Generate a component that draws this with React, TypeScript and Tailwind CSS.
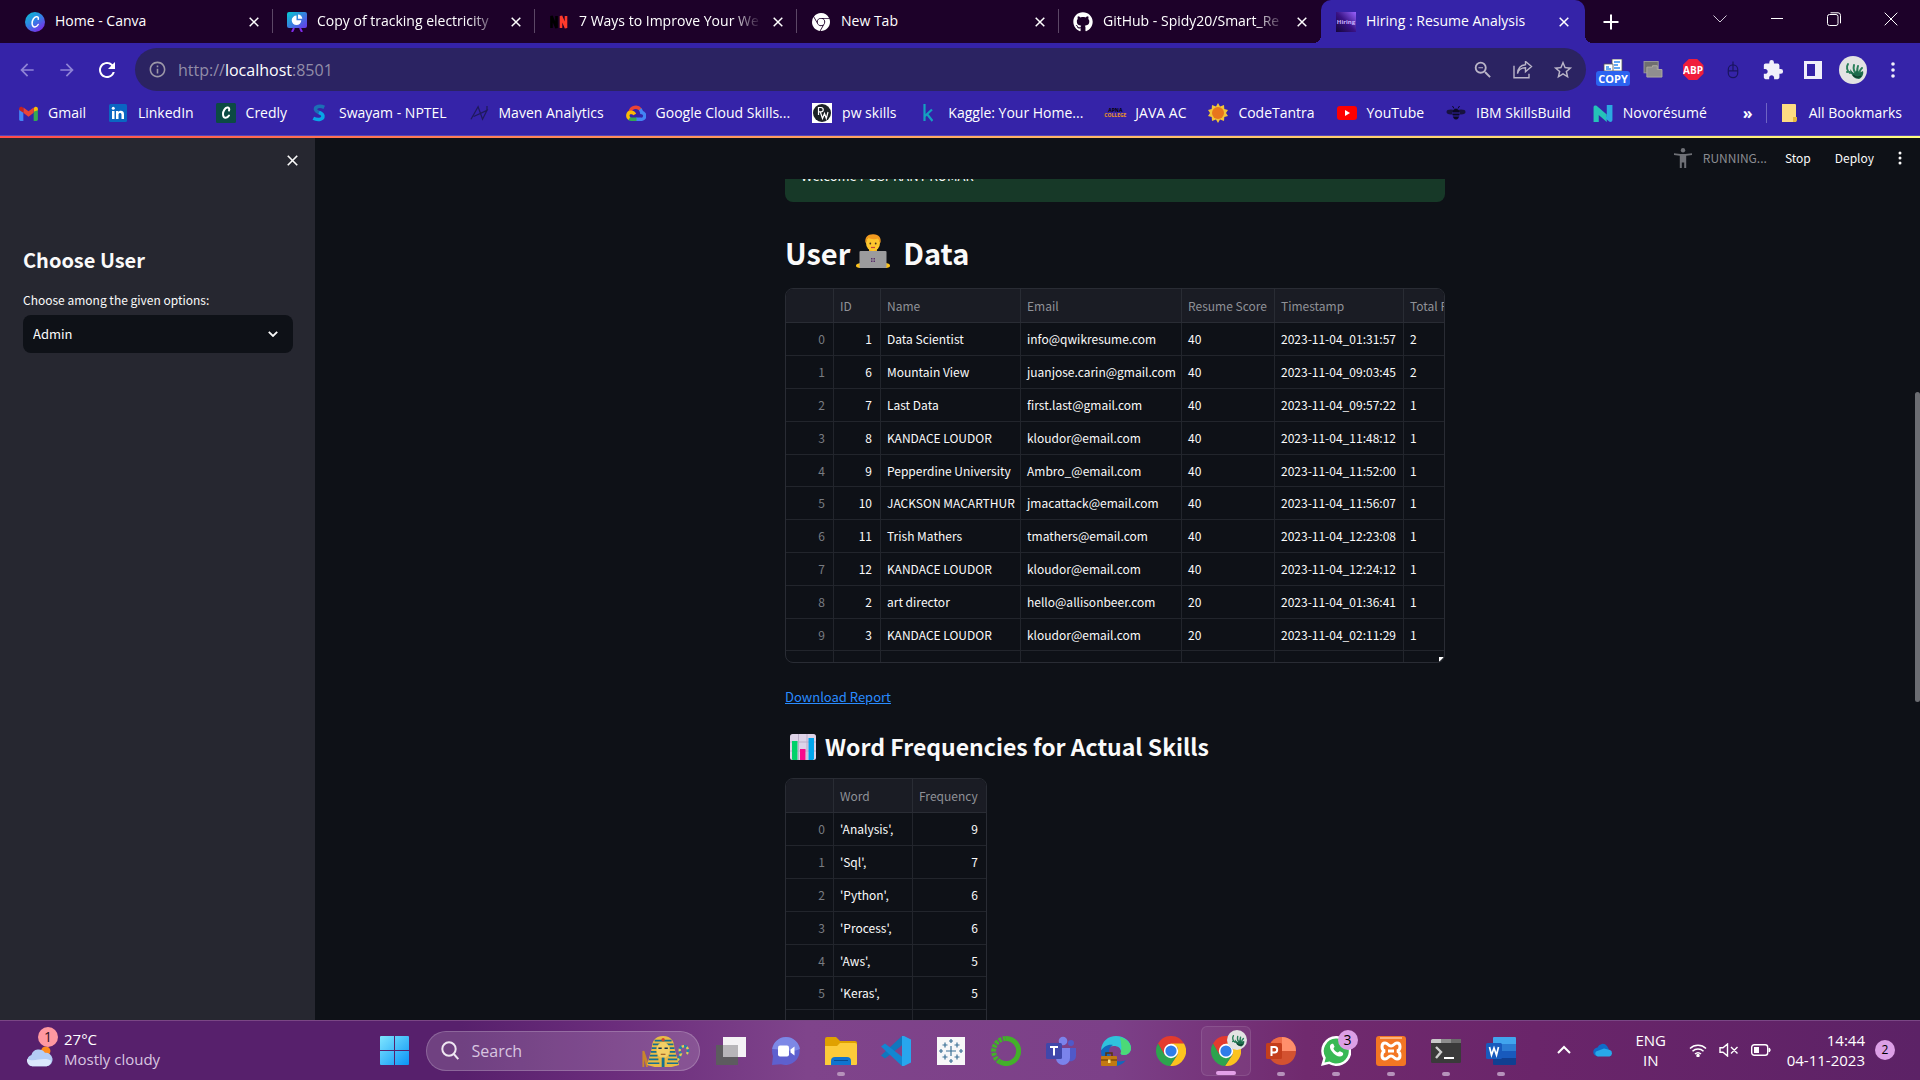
import React, { type ReactNode } from "react";
import { FaGithub } from "react-icons/fa";
import { SiGooglechrome } from "react-icons/si";
import { MdArrowBack, MdArrowForward, MdExtension, MdInfoOutline, MdRefresh, MdStarBorder, MdZoomOut } from "react-icons/md";

/* ---------- browser tabs ---------- */

function CanvaIcon() {
  return (
    <svg viewBox="0 0 20 20" className="size-5">
      <defs>
        <linearGradient id="canva" x1="0" y1="0" x2="0.7" y2="1">
          <stop offset="0" stopColor="#08c4cf" />
          <stop offset="0.5" stopColor="#2e86e6" />
          <stop offset="1" stopColor="#7b2be8" />
        </linearGradient>
      </defs>
      <circle cx="10" cy="10" r="10" fill="url(#canva)" />
      <path d="M13.2 7.2c.6-1.6-.3-2.8-1.9-2.5-2.3.4-4.2 3.600-4.200 6.500 0 2.300 1.100 3.800 2.800 3.700 1.300-.1 2.500-1 3.300-2.400" fill="none" stroke="#fff" strokeWidth="1.500" strokeLinecap="round" />
    </svg>
  );
}

function SlidesIcon() {
  return (
    <svg viewBox="0 0 20 20" className="size-5">
      <defs>
        <linearGradient id="slides" x1="0" y1="0" x2="1" y2="1">
          <stop offset="0" stopColor="#05cbd2" />
          <stop offset="1" stopColor="#6a35ea" />
        </linearGradient>
      </defs>
      <rect width="20" height="16" rx="2" fill="url(#slides)" />
      <path d="M7 16l-2 4M13 16l2 4" stroke="#7d2ae8" strokeWidth="2" />
      <path d="M9.500 3.500a4.800 4.800 0 1 0 4.800 4.800H9.500z" fill="#fff" />
      <path d="M11 2.500v4.300h4.300A4.300 4.300 0 0 0 11 2.500z" fill="#fff" />
    </svg>
  );
}

function NNIcon() {
  return (
    <svg viewBox="0 0 20 20" className="size-5">
      <path d="M2.500 16V4l5 12V4" fill="none" stroke="#000" strokeWidth="2.600" />
      <path d="M12 16V4l5 12V4" fill="none" stroke="#ff3a2b" strokeWidth="2.600" />
    </svg>
  );
}

function HiringIcon() {
  return (
    <span className="flex size-5 items-center justify-center bg-linear-to-bl from-[#9a62ff] via-[#3a1286] to-[#14063a] text-[6px] font-bold leading-none text-[#c9b2ff]">
      Hiring
    </span>
  );
}

function CloseGlyph({ className = "size-[10px]" }: { className?: string }) {
  return (
    <svg viewBox="0 0 10 10" className={className} fill="none" stroke="currentColor" strokeWidth="1.500">
      <path d="M0.700 0.700l8.600 8.600M9.300 0.700L0.700 9.300" />
    </svg>
  );
}

const tabs: { title: string; icon: ReactNode; fade?: boolean }[] = [
  { title: "Home - Canva", icon: <CanvaIcon /> },
  { title: "Copy of tracking electricity", icon: <SlidesIcon />, fade: true },
  { title: "7 Ways to Improve Your We", icon: <NNIcon />, fade: true },
  { title: "New Tab", icon: <SiGooglechrome className="size-[18px] text-white" /> },
  { title: "GitHub - Spidy20/Smart_Re", icon: <FaGithub className="size-5 text-white" />, fade: true },
  { title: "Hiring : Resume Analysis", icon: <HiringIcon /> },
];

function TabStrip() {
  return (
    <div className="flex h-[43px] shrink-0 items-stretch bg-[#1d0129] pl-[11px] text-white">
      {tabs.map((t, i) => {
        const active = i === tabs.length - 1;
        return (
          <div
            key={t.title}
            className={
              active
                ? "relative flex w-[264px] min-w-0 items-center rounded-t-[10px] bg-[#3523a8] pl-[15px] pr-4"
                : "relative flex w-[262px] min-w-0 items-center pl-[14px] pr-[14px]"
            }
          >
            <span className="flex w-5 shrink-0 justify-center">{t.icon}</span>
            <span
              className={
                t.fade
                  ? "ml-[10px] mr-2 min-w-0 flex-1 overflow-hidden whitespace-nowrap pb-px text-sm [mask-image:linear-gradient(to_right,#000_82%,transparent_98%)]"
                  : "ml-[10px] mr-2 min-w-0 flex-1 overflow-hidden whitespace-nowrap pb-px text-sm"
              }
            >
              {t.title}
            </span>
            <button aria-label={`Close ${t.title}`} className="shrink-0">
              <CloseGlyph />
            </button>
            {i < tabs.length - 2 && <span className="absolute right-0 top-[9px] h-6 w-px bg-[#5c4766]" />}
            {active && (
              <>
                <span className="absolute -left-2 bottom-0 size-2 bg-[radial-gradient(circle_at_0_0,transparent_8px,#3523a8_8px)]" />
                <span className="absolute -right-2 bottom-0 size-2 bg-[radial-gradient(circle_at_100%_0,transparent_8px,#3523a8_8px)]" />
              </>
            )}
          </div>
        );
      })}
      <button aria-label="New tab" className="ml-[17px] flex w-[18px] items-center justify-center">
        <svg viewBox="0 0 16 16" className="size-4" stroke="#fff" strokeWidth="2">
          <path d="M8 0.500v15M0.500 8h15" />
        </svg>
      </button>
      <div className="ml-auto flex items-stretch pb-[6px] pr-px">
        <button aria-label="Search tabs" className="flex w-[57px] items-center justify-center">
          <svg viewBox="0 0 14 8" className="h-2 w-[14px]" fill="none" stroke="#cfc7d6"><path d="M.5.5L7 7l6.500-6.500" /></svg>
        </button>
        <button aria-label="Minimize" className="flex w-[57px] items-center justify-center">
          <span className="h-px w-3 bg-white" />
        </button>
        <button aria-label="Restore" className="flex w-[57px] items-center justify-center">
          <svg viewBox="0 0 14 14" className="size-[14px]" fill="none" stroke="#fff"><rect x="0.500" y="2.500" width="10.500" height="11" rx="2" /><path d="M3.500 .8h7.500a2.500 2.500 0 0 1 2.500 2.500v8" /></svg>
        </button>
        <button aria-label="Close window" className="flex w-[57px] items-center justify-center">
          <svg viewBox="0 0 14 14" className="size-[14px]" stroke="#fff"><path d="M.7.7l12.600 12.600M13.300.7L.7 13.300" /></svg>
        </button>
      </div>
    </div>
  );
}

/* ---------- address bar ---------- */

function GreenBird({ className }: { className: string }) {
  return (
    <svg viewBox="0 0 28 28" className={className}>
      <circle cx="14" cy="14" r="14" fill="#e3e3e3" />
      <path d="M9 8c-2 3-1 7 2 9M8 16c3-1 5 2 8 2M15 9c-1 4 0 7 3 9M19 10c-1 3-1 6 1 8M23 12c-2 2-3 4-2 6" fill="none" stroke="#2a7f5a" strokeWidth="2" strokeLinecap="round" />
      <path d="M11 13l4 5 3-4 2 3 4-2c1 3-1 7-4 8-4 0-8-3-9-10z" fill="#1d6b4c" />
      <path d="M14 19c2 2 5 3 8 1" stroke="#0f3d2c" strokeWidth="1.500" fill="none" />
    </svg>
  );
}

const extensions: { name: string; node: ReactNode }[] = [
  {
    name: "Copy",
    node: (
      <span className="flex flex-col items-center pt-[6px]">
        <svg viewBox="0 0 20 12" className="h-3 w-5">
          <path d="M9 0h10v12H9z" fill="#fff" stroke="#555" strokeWidth=".8" />
          <path d="M1 5h9v7H1z" fill="#fff" stroke="#555" strokeWidth=".8" />
          <path d="M11 3h6M11 6h4M11 9h6M3 8h3M3 10h5" stroke="#2f8df0" strokeWidth="1.300" />
        </svg>
        <span className="rounded-[3px] bg-[#2b63f0] px-[2px] text-[11px] font-bold leading-[15px] text-white">COPY</span>
      </span>
    ),
  },
  {
    name: "Windows",
    node: (
      <svg viewBox="0 0 20 18" className="h-[17px] w-5">
        <rect x="0.500" y="0.500" width="15" height="12" fill="#6f6f6f" stroke="#9a9a9a" />
        <path d="M3.500 6.500h6V5h5v4h5v8h-16z" fill="#8f8f8f" stroke="#b0aca0" />
      </svg>
    ),
  },
  {
    name: "Adblock Plus",
    node: (
      <span className="flex size-[21px] items-center justify-center bg-[#f01d3c] text-[10px] font-bold leading-none text-white [clip-path:polygon(30%_0,70%_0,100%_30%,100%_70%,70%_100%,30%_100%,0_70%,0_30%)]">
        ABP
      </span>
    ),
  },
  {
    name: "Mouse",
    node: (
      <svg viewBox="0 0 14 20" className="h-[18px] w-3" fill="none" stroke="#1a1560" strokeWidth="1.400">
        <rect x="1.500" y="4" width="11" height="15" rx="5.500" />
        <path d="M7 0v11M1.500 11h11" />
      </svg>
    ),
  },
  { name: "Extensions", node: <MdExtension className="size-[22px] text-[#f1f0fa]" /> },
  {
    name: "Side panel",
    node: (
      <svg viewBox="0 0 18 18" className="size-[18px]"><path d="M0 0h18v18H0z M3 3v12h8V3z" fill="#f1f0fa" fillRule="evenodd" /></svg>
    ),
  },
  { name: "Profile", node: <GreenBird className="size-7" /> },
  {
    name: "Menu",
    node: (
      <svg viewBox="0 0 4 16" className="h-4 w-1" fill="#f1f0fa"><circle cx="2" cy="2" r="1.800" /><circle cx="2" cy="8" r="1.800" /><circle cx="2" cy="14" r="1.800" /></svg>
    ),
  },
];

function AddressBar() {
  return (
    <div className="flex h-[53px] shrink-0 items-center bg-[#3523a8] pl-[7px] pr-[7px]">
      <button aria-label="Back" className="flex w-10 justify-center"><MdArrowBack className="size-5 text-[#8f84d6]" /></button>
      <button aria-label="Forward" className="flex w-10 justify-center"><MdArrowForward className="size-5 text-[#8f84d6]" /></button>
      <button aria-label="Reload" className="flex w-10 justify-center"><MdRefresh className="size-6 text-white" /></button>
      <div className="ml-2 flex h-[43px] min-w-0 flex-1 items-center rounded-full bg-[#2b2362] pl-[13px]">
        <MdInfoOutline className="size-[19px] shrink-0 text-[#9c98a8]" />
        <a href="http://localhost:8501" className="ml-[11px] flex-1 text-base text-[#928da8]">
          http://<span className="text-white">localhost</span>:8501
        </a>
        <button aria-label="Zoom" className="flex w-10 justify-center"><MdZoomOut className="size-[22px] text-[#bab5c8]" /></button>
        <button aria-label="Share" className="flex w-10 justify-center">
          <svg viewBox="0 0 20 18" className="h-[18px] w-5" fill="none" stroke="#bab5c8" strokeWidth="1.400"><path d="M1 5v12h15v-4M4.500 13c.8-4 3.500-6 8-6V11l6-5.300-6-5V4C7.500 4.300 4.800 8 4.500 13z" transform="translate(0 -.3)" /></svg>
        </button>
        <button aria-label="Bookmark" className="mr-[3px] flex w-10 justify-center"><MdStarBorder className="size-[22px] text-[#bab5c8]" /></button>
      </div>
      <div className="ml-[7px] flex items-center">
        {extensions.map((e) => (
          <button key={e.name} aria-label={e.name} className="flex w-10 items-center justify-center">{e.node}</button>
        ))}
      </div>
    </div>
  );
}

/* ---------- bookmarks ---------- */

const bookmarks: { name: string; icon: ReactNode }[] = [
  {
    name: "Gmail",
    icon: (
      <svg viewBox="0 0 20 16" className="h-[15px] w-[19px]">
        <path d="M0 3v11.500C0 15.300.7 16 1.500 16H4.500V6z" fill="#4285f4" />
        <path d="M20 3v11.500c0 .8-.7 1.500-1.500 1.500h-3V6z" fill="#34a853" />
        <path d="M15.500 6V2l1-.8c1.500-1.100 3.500-.2 3.500 1.800v1.500z" fill="#fbbc04" />
        <path d="M4.500 6V1.500L10 5.700l5.500-4.200V7.300L10 11.500 4.500 7.300z" fill="#ea4335" />
        <path d="M0 3C0 1 2 .1 3.500 1.200l1 .8v5.300L0 4.200z" fill="#c5221f" />
      </svg>
    ),
  },
  {
    name: "LinkedIn",
    icon: (
      <svg viewBox="0 0 18 18" className="size-[18px]">
        <rect width="18" height="18" rx="1.500" fill="#0a66c2" />
        <path d="M3 7h2.500v8H3zM7 7h2.400v1.200c1.300-2.200 5.600-1.900 5.600 2V15h-2.500v-4.300c0-2.200-3-2-3 0V15H7z" fill="#fff" />
        <circle cx="4.250" cy="4.300" r="1.500" fill="#fff" />
      </svg>
    ),
  },
  {
    name: "Credly",
    icon: (
      <svg viewBox="0 0 20 20" className="size-5">
        <rect width="20" height="20" rx="1.500" fill="#0c4a43" />
        <path d="M13 7.500c.7-1.700-.1-3.200-1.800-2.900C9 5 7 8 7 11c0 2.400 1 3.900 2.700 3.800 1.400-.1 2.500-1 3.300-2.300" fill="none" stroke="#fff" strokeWidth="2" strokeLinecap="round" />
      </svg>
    ),
  },
  {
    name: "Swayam - NPTEL",
    icon: (
      <svg viewBox="0 0 16 20" className="h-[18px] w-[14px]" fill="none" strokeWidth="4">
        <path d="M14 3.500C9 1 3.500 2.500 4 6c.3 2 3 3.200 6 4.500" stroke="#1c6fb5" />
        <path d="M8 9.300c3 1.200 5 2.700 4.500 5.200-.6 3-6 4-11 1.500" stroke="#08a6e6" />
      </svg>
    ),
  },
  {
    name: "Maven Analytics",
    icon: (
      <svg viewBox="0 0 20 18" className="h-4 w-5" fill="none" stroke="#1f1a5c" strokeWidth="1.400">
        <path d="M1 16L9 2l5 14 5-10L4 13" />
        <path d="M19 1v5" />
      </svg>
    ),
  },
  {
    name: "Google Cloud Skills...",
    icon: (
      <svg viewBox="0 0 20 16" className="h-4 w-5" fill="none" strokeWidth="3.400">
        <path d="M4 7a6 6 0 0 1 10.500-2.500" stroke="#ea4335" />
        <path d="M14 4.200c1 1 1.500 2 1.700 3.300a3.400 3.400 0 0 1-.7 6.800H10" stroke="#4285f4" />
        <path d="M10.500 14.300H5.500c-1 0-1.800-.3-2.500-.8" stroke="#34a853" />
        <path d="M3.300 13.600C1 12 1.300 7.500 5 7.300c2 0 3 1 3.700 2.200" stroke="#fbbc04" />
      </svg>
    ),
  },
  {
    name: "pw skills",
    icon: (
      <svg viewBox="0 0 20 20" className="size-5">
        <rect width="20" height="20" fill="#fff" />
        <circle cx="10" cy="10" r="9" fill="#1c2226" />
        <path d="M6.500 12V4.500h2.500a2.200 2.200 0 0 1 0 4.400H7M8.500 9.500l2 6 2-5 1.800 5L16 9" fill="none" stroke="#fff" strokeWidth="1.200" />
      </svg>
    ),
  },
  {
    name: "Kaggle: Your Home...",
    icon: (
      <svg viewBox="0 0 10 18" className="h-[18px] w-[10px]" fill="none" stroke="#14a0c0" strokeWidth="2.200"><path d="M1.500 0v17M9 5.500L2 12M4 10l5.500 7" /></svg>
    ),
  },
  {
    name: "JAVA AC",
    icon: (
      <span className="flex flex-col items-center text-[5px] font-bold leading-[5px]">
        <span className="text-black">APNA</span>
        <span className="text-[#f09a1a]">COLLEGE</span>
      </span>
    ),
  },
  {
    name: "CodeTantra",
    icon: (
      <svg viewBox="0 0 20 20" className="size-5">
        <path d="M10 0l2 3.500L16 2l.3 4 3.700 1-2 3 2 3-3.700 1-.3 4-4-1.500L10 20l-2-3.500L4 18l-.3-4L0 13l2-3-2-3 3.700-1L4 2l4 1.500z" fill="#f2c437" />
        <circle cx="10" cy="10" r="6" fill="#e8761c" />
      </svg>
    ),
  },
  {
    name: "YouTube",
    icon: (
      <svg viewBox="0 0 20 14" className="h-[14px] w-5"><rect width="20" height="14" rx="3" fill="#f00" /><path d="M8 4l5 3-5 3z" fill="#fff" /></svg>
    ),
  },
  {
    name: "IBM SkillsBuild",
    icon: (
      <svg viewBox="0 0 20 14" className="h-[14px] w-5">
        <ellipse cx="5" cy="6" rx="4.500" ry="2.400" fill="#17123f" /><ellipse cx="15" cy="6" rx="4.500" ry="2.400" fill="#17123f" />
        <ellipse cx="10" cy="8" rx="3.500" ry="5.500" fill="#0b0824" />
        <path d="M6 7h8M6 10h8" stroke="#3523a8" /><path d="M8 2.500L6.500 0M12 2.500L13.500 0" stroke="#0b0824" />
      </svg>
    ),
  },
  {
    name: "Novorésumé",
    icon: (
      <svg viewBox="0 0 20 18" className="h-[17px] w-5">
        <path d="M0 2.500C0 .5 2 0 3.500 1L14 10v8L5.500 10.500V18H0z" fill="#25c3b8" />
        <path d="M14 0h6v15.500c0 2-2 3-3.500 2L12.500 14 14 12z" fill="#2ba9e0" />
      </svg>
    ),
  },
];

function Bookmarks() {
  return (
    <nav className="flex h-10 shrink-0 items-center border-b border-[#5546b8] bg-[#3523a8] pb-[9px] pl-[18px] pr-[18px] pt-1 text-sm text-white">
      <div className="flex min-w-0 flex-1 items-center justify-between">
        {bookmarks.map((b) => (
          <a key={b.name} href="#" className="flex items-center gap-[10px] whitespace-nowrap">
            <span className="flex w-5 shrink-0 justify-center">{b.icon}</span>
            {b.name}
          </a>
        ))}
      </div>
      <button aria-label="More bookmarks" className="ml-9 text-base font-bold leading-none">»</button>
      <span className="ml-[13px] h-5 w-px bg-[#6f64c4]" />
      <a href="#" className="ml-[14px] flex items-center gap-3 whitespace-nowrap">
        <svg viewBox="0 0 16 18" className="h-[18px] w-4"><path d="M1 0h13a1 1 0 0 1 1 1v16a1 1 0 0 1-1 1H1z" fill="#fddc82" /><path d="M12 18v-5h4v3a2 2 0 0 1-2 2z" fill="#e8b93e" /></svg>
        All Bookmarks
      </a>
    </nav>
  );
}

/* ---------- app ---------- */

function Sidebar() {
  return (
    <aside className="w-[315px] shrink-0 bg-[#262730] pl-[23px] pr-[22px] text-[#fafafa]">
      <div className="flex h-11 items-center justify-end">
        <button aria-label="Close sidebar" className="mr-[-5px]"><CloseGlyph className="size-[11px]" /></button>
      </div>
      <h2 className="mt-16 text-xl font-bold leading-7">Choose User</h2>
      <label htmlFor="user" className="mt-4 block text-xs leading-5">Choose among the given options:</label>
      <div className="relative mt-[5px]">
        <select id="user" defaultValue="Admin" className="h-[38px] w-full appearance-none rounded-lg bg-[#0e1117] px-[10px] text-[13px]">
          <option>User</option>
          <option>Admin</option>
        </select>
        <svg viewBox="0 0 10 6" className="pointer-events-none absolute right-[15px] top-4 h-[6px] w-[10px]" fill="none" stroke="#fafafa" strokeWidth="1.800">
          <path d="M.8.8L5 5 9.200.8" />
        </svg>
      </div>
    </aside>
  );
}

const users = [
  [1, "Data Scientist", "info@qwikresume.com", 40, "2023-11-04_01:31:57", 2],
  [6, "Mountain View", "juanjose.carin@gmail.com", 40, "2023-11-04_09:03:45", 2],
  [7, "Last Data", "first.last@gmail.com", 40, "2023-11-04_09:57:22", 1],
  [8, "KANDACE LOUDOR", "kloudor@email.com", 40, "2023-11-04_11:48:12", 1],
  [9, "Pepperdine University", "Ambro_@email.com", 40, "2023-11-04_11:52:00", 1],
  [10, "JACKSON MACARTHUR", "jmacattack@email.com", 40, "2023-11-04_11:56:07", 1],
  [11, "Trish Mathers", "tmathers@email.com", 40, "2023-11-04_12:23:08", 1],
  [12, "KANDACE LOUDOR", "kloudor@email.com", 40, "2023-11-04_12:24:12", 1],
  [2, "art director", "hello@allisonbeer.com", 20, "2023-11-04_01:36:41", 1],
  [3, "KANDACE LOUDOR", "kloudor@email.com", 20, "2023-11-04_02:11:29", 1],
];

const words: [string, number][] = [
  ["'Analysis',", 9],
  ["'Sql',", 7],
  ["'Python',", 6],
  ["'Process',", 6],
  ["'Aws',", 5],
  ["'Keras',", 5],
];

const th = "border-b border-r border-[#292c34] bg-[#1a1c24] px-[6px] text-left font-normal text-[#8f9197] last:border-r-0";
const td = "border-b border-r border-[#22252c] px-[6px] text-[#fafafa] last:border-r-0";
const tdNum = "border-b border-r border-[#22252c] px-2 text-right text-[#fafafa] last:border-r-0";
const tdIndex = "border-b border-r border-[#22252c] px-2 text-right text-[#797c82]";

function UserTable() {
  return (
    <div className="relative h-[375px] overflow-hidden rounded-lg border border-[#292c34]">
      <table className="w-[760px] table-fixed border-separate border-spacing-0 whitespace-nowrap text-xs">
        <colgroup>
          <col className="w-12" /><col className="w-[47px]" /><col className="w-[140px]" /><col className="w-[161px]" /><col className="w-[93px]" /><col className="w-[129px]" /><col />
        </colgroup>
        <thead>
          <tr className="h-[34px]">
            {["", "ID", "Name", "Email", "Resume Score", "Timestamp", "Total Page"].map((h) => <th key={h} className={th}>{h}</th>)}
          </tr>
        </thead>
        <tbody>
          {users.map((u, i) => (
            <tr key={i} className="h-[33px] nth-[5n]:h-8">
              <td className={tdIndex}>{i}</td>
              {u.map((v, j) => <td key={j} className={j === 0 ? tdNum : td}>{v}</td>)}
            </tr>
          ))}
          <tr className="h-[33px]">
            {[0, 1, 2, 3, 4, 5, 6].map((k) => <td key={k} className={td} />)}
          </tr>
        </tbody>
      </table>
      <span className="absolute bottom-0 right-0 size-[5px] bg-white [clip-path:polygon(0_0,100%_0,0_100%)]" />
    </div>
  );
}

function WordTable() {
  return (
    <div className="h-[375px] w-[202px] shrink-0 overflow-hidden rounded-lg border border-[#292c34]">
      <table className="w-full table-fixed border-separate border-spacing-0 whitespace-nowrap text-xs">
        <colgroup><col className="w-12" /><col className="w-[79px]" /><col /></colgroup>
        <thead>
          <tr className="h-[34px]">{["", "Word", "Frequency"].map((h) => <th key={h} className={th}>{h}</th>)}</tr>
        </thead>
        <tbody>
          {words.map(([w, n], i) => (
            <tr key={w} className="h-[33px] nth-[5n]:h-8">
              <td className={tdIndex}>{i}</td>
              <td className={td}>{w}</td>
              <td className={tdNum}>{n}</td>
            </tr>
          ))}
          <tr className="h-[33px]"><td className={tdIndex} /><td className={td} /><td className={td} /></tr>
        </tbody>
      </table>
    </div>
  );
}

function Technologist() {
  return (
    <svg viewBox="0 0 34 34" className="size-[34px]">
      <path d="M5 34c-4 0-5-1-5-2.500S3 29 5 29h24c3 0 5 1 5 2.500S33 34 29 34z" fill="#fcc21b" />
      <path d="M13 12h8v6h-8z" fill="#f0a91c" />
      <ellipse cx="17" cy="9" rx="7" ry="8" fill="#fdc62e" />
      <path d="M9.500 9C8.500 3 12 0 17.500.3 23 .5 25.500 4 24.500 9c-1-1-1.500-3-2.500-4.500-3 1-7 .8-10-.5-1 1-1.500 4-2.500 5z" fill="#f29a1f" />
      <circle cx="14.300" cy="9.500" r=".9" fill="#4a3420" /><circle cx="19.700" cy="9.500" r=".9" fill="#4a3420" />
      <path d="M15 13.500h4" stroke="#c5443c" strokeWidth="1.200" />
      <rect x="3.500" y="17" width="27" height="17" rx="1" fill="#9b9b9d" />
      <path d="M15 24h1.500v1.500H15zM17.500 24H19v1.500h-1.500zM15 26.500h1.500V28H15zM17.500 26.500H19V28h-1.500z" fill="#5a2f6b" />
    </svg>
  );
}

function BarChart() {
  return (
    <svg viewBox="0 0 26 26" className="size-[26px]">
      <rect width="26" height="26" rx="2.500" fill="#ded3e8" />
      <path d="M0 8h26M0 17h26M8.500 0v26M17 0v26" stroke="#bcaec9" />
      <path d="M2 7h5.500v19H2.500L2 25z" fill="#00d26a" />
      <path d="M10 15h5.500v11H10z" fill="#f70a8d" />
      <path d="M18.500 4H24v21l-1 1h-4.500z" fill="#00a6ed" />
    </svg>
  );
}

function MainPane() {
  return (
    <main className="flex min-w-0 flex-1 flex-col bg-[#0e1117] text-[#fafafa]">
      <header className="flex h-[41px] shrink-0 items-center justify-end pr-[18px] pb-[1px] text-xs">
        <svg viewBox="0 0 18 20" className="h-5 w-[18px]" fill="#6f7177">
          <circle cx="9" cy="2.200" r="2.200" />
          <path d="M0 5.200c5 1 13 1 18 0v1.700l-5.800.9V20h-2v-5.500H7.800V20h-2V7.800L0 6.900z" />
        </svg>
        <span className="ml-[11px] text-[#8b8d93]">RUNNING...</span>
        <button className="ml-[18px]">Stop</button>
        <button className="ml-6">Deploy</button>
        <button aria-label="Main menu" className="ml-6">
          <svg viewBox="0 0 4 14" className="h-[14px] w-1" fill="#fafafa"><circle cx="2" cy="2" r="1.500" /><circle cx="2" cy="7" r="1.500" /><circle cx="2" cy="12" r="1.500" /></svg>
        </button>
      </header>
      <div className="flex min-h-0 flex-1 overflow-hidden">
        <div className="min-w-0 flex-1">
          <section className="mx-auto flex w-full max-w-[660px] flex-col">
            <div className="flex h-[23px] shrink-0 items-end overflow-hidden">
              <div className="w-full rounded-lg bg-[#173928] p-4 text-[13px] leading-5">Welcome PUSPKANT KUMAR</div>
            </div>
            <h1 className="flex h-[86px] items-center pt-4 text-[29px] font-bold">
              User <span className="mb-[5px] ml-[6px] mr-[13px]"><Technologist /></span> Data
            </h1>
            <UserTable />
            <p className="mt-5 text-[13px] leading-7">
              <a href="#" className="text-[#2a8cff] underline">Download Report</a>
            </p>
            <h2 className="mb-3 mt-4 flex items-center pl-[5px] text-[23px] font-bold leading-[39px]">
              <BarChart />
              <span className="ml-[9px]">Word Frequencies for Actual Skills</span>
            </h2>
            <WordTable />
          </section>
        </div>
        <div className="w-[5px] shrink-0 pt-[213px]">
          <div className="h-[310px] rounded-full bg-[#6b6d72]" />
        </div>
      </div>
    </main>
  );
}

/* ---------- taskbar ---------- */

function ChromeIcon() {
  return (
    <svg viewBox="0 0 30 30" className="size-[30px]">
      <path d="M2 7.500A15 15 0 0 1 28 7.500L15 8.500 8.500 18.800z" fill="#e33b2e" />
      <path d="M28 7.500A15 15 0 0 1 14 30l7.500-11.300L22 12 15 7.500z" fill="#fcc31e" />
      <path d="M2 7.500A15 15 0 0 0 14 30l7.300-11.200-7 2-5.800-2z" fill="#2da44e" />
      <circle cx="15" cy="15" r="7.200" fill="#fff" />
      <circle cx="15" cy="15" r="5.600" fill="#2f7de9" />
    </svg>
  );
}

const pins: { name: string; icon: ReactNode; open?: boolean; active?: boolean; badge?: string }[] = [
  {
    name: "Task view",
    icon: (
      <svg viewBox="0 0 30 30" className="size-[30px]"><path d="M0 9h22v20H0z" fill="#5d5b5f" /><path d="M7 1h23v20H7z" fill="#f4f2f5" /><path d="M7 9h15v12H7z" fill="#b7b5b9" /></svg>
    ),
  },
  {
    name: "Chat",
    icon: (
      <svg viewBox="0 0 28 28" className="size-7">
        <path d="M14 0a14 14 0 1 1-5 27.200L0 28l1-9A14 14 0 0 1 14 0z" fill="#5e60cf" />
        <path d="M14 0a14 14 0 0 1 13.900 12C20 16 8 12 .2 12A14 14 0 0 1 14 0z" fill="#7d88e6" />
        <rect x="6" y="8.500" width="11" height="11" rx="2" fill="#fff" /><path d="M18.500 12.500l4-3v9l-4-3z" fill="#fff" />
      </svg>
    ),
  },
  {
    name: "File Explorer",
    open: true,
    icon: (
      <svg viewBox="0 0 32 28" className="h-7 w-8"><path d="M0 2a2 2 0 0 1 2-2h9l4 4h15a2 2 0 0 1 2 2v6H0z" fill="#e0a100" /><path d="M0 9l12 0 3-3h15a2 2 0 0 1 2 2v19a1 1 0 0 1-1 1H0z" fill="#fccb3a" /><path d="M6 28v-4a4 4 0 0 1 4-4h12a4 4 0 0 1 4 4v4z" fill="#0f74cf" /><path d="M9 23.500h14" stroke="#0a4c91" /></svg>
    ),
  },
  {
    name: "Visual Studio Code",
    icon: (
      <svg viewBox="0 0 30 30" className="size-[30px]"><path d="M22 0v8.500L4 22.500 0 19.500 21 0z" fill="#0f77be" /><path d="M0 10.500l4-3 18 14V30h-1z" fill="#1286d2" /><path d="M21 0h2l7 3.500v23L23 30h-2z" fill="#28a6ee" /></svg>
    ),
  },
  {
    name: "Tableau",
    icon: (
      <svg viewBox="0 0 28 28" className="size-7"><path d="M0 0h28v28H0z" fill="#f7f7f8" /><path d="M14 9v10M9 14h10M14 2v4M12 4h4M14 22v4M12 24h4M4 12v4M2 14h4M24 12v4M22 14h4M8 5.500v5M5.500 8h5M20 5.500v5M17.500 8h5M8 17.500v5M5.500 20h5M20 17.500v5M17.500 20h5" stroke="#3a7096" strokeWidth="1.200" /></svg>
    ),
  },
  {
    name: "Anaconda",
    icon: (
      <svg viewBox="0 0 30 30" className="size-[30px]" fill="none" stroke="#43b02a" strokeWidth="5"><path d="M15 2.500a12.500 12.500 0 1 1-6 23.400" /><path d="M9 25.900A12.500 12.500 0 0 1 15 2.500" strokeDasharray="3 1.200" /></svg>
    ),
  },
  {
    name: "Teams",
    icon: (
      <svg viewBox="0 0 30 30" className="size-[30px]"><circle cx="25" cy="7" r="3" fill="#5059c9" /><circle cx="17" cy="5" r="4.300" fill="#7b83eb" /><path d="M20 12h10v8a5.500 5.500 0 0 1-9 4z" fill="#5059c9" /><path d="M10 12h14v10a7 7 0 0 1-14 0z" fill="#7b83eb" /><rect y="7" width="16" height="16" rx="1.500" fill="#4047ab" /><path d="M4 11h8M8 11v8.500" stroke="#fff" strokeWidth="2" /></svg>
    ),
  },
  {
    name: "Edge",
    icon: (
      <svg viewBox="0 0 30 30" className="size-[30px]"><path d="M0 14C1 5 7 0 15 0c9 0 15 6 15 12 0 4-3 7-7 7-3 0-4-1-3-3 0-4-3-6-7-6-6 0-10 3-13 4z" fill="#2fc3dc" /><path d="M19 1c7 2 11 7 11 11 0 4-3 7-7 7-3 0-4-1-3-3 1-5 0-9-1-15z" fill="#4cd977" /><path d="M0 15c2-4 7-7 12-6-4 2-5 6-3 11 3 5 9 7 16 4-3 4-7 6-11 6C5 30 0 22 0 15z" fill="#1268bb" /><rect y="20" width="16" height="10" rx="1" fill="#c27a12" /><path d="M5 20v-3h6v3" stroke="#5a3408" strokeWidth="1.500" fill="none" /><path d="M0 24h16" stroke="#6c4008" strokeWidth="1.200" /><path d="M7 23.500h2.500V27H7z" fill="#ffe27a" /></svg>
    ),
  },
  { name: "Chrome", icon: <ChromeIcon /> },
  {
    name: "Chrome profile",
    open: true,
    active: true,
    icon: <span className="relative"><ChromeIcon /><span className="absolute -right-[6px] -top-[6px]"><GreenBird className="size-5" /></span></span>,
  },
  {
    name: "PowerPoint",
    open: true,
    icon: (
      <svg viewBox="0 0 30 28" className="h-7 w-[30px]"><circle cx="16" cy="14" r="14" fill="#d35230" /><path d="M16 0a14 14 0 0 1 14 14H16z" fill="#ff8f6b" /><path d="M16 0A14 14 0 0 0 2 14h14z" fill="#ed6c47" /><rect y="6" width="16" height="16" rx="1.500" fill="#c43e1c" /><path d="M5.500 19v-9h3a2.700 2.700 0 0 1 0 5.400h-3" fill="none" stroke="#fff" strokeWidth="2" /></svg>
    ),
  },
  {
    name: "WhatsApp",
    open: true,
    badge: "3",
    icon: (
      <svg viewBox="0 0 30 30" className="size-[30px]"><path d="M15 0a15 15 0 1 1-7 28L0 30l2.200-7.500A15 15 0 0 1 15 0z" fill="#fff" /><path d="M15 2.500a12.500 12.500 0 1 1-6.500 23L3.500 26.500l1.300-4.700A12.500 12.500 0 0 1 15 2.500z" fill="#38b954" /><path d="M10.500 8c-2 1-2.300 4 .5 7.500 3.500 4.500 8 6.500 10.500 4 1-1 .8-2.500 0-3l-2.500-1.200c-1-.2-1.500 1.500-2.500 1.300-2-.8-3.500-2.500-4-4 0-1 1.200-1.300 1-2.200L12.300 8c-.3-.5-1-.4-1.800 0z" fill="#fff" /></svg>
    ),
  },
  {
    name: "XAMPP",
    open: true,
    icon: (
      <svg viewBox="0 0 30 30" className="size-[30px]"><rect width="30" height="30" rx="3" fill="#f37623" /><path d="M4 1h22v2H4z" fill="#fbb27d" /><path d="M9 7c-4 0-4 7 0 8-4 1-4 8 0 8 3 0 3-3 6-3s3 3 6 3c4 0 4-7 0-8 4-1 4-8 0-8-3 0-3 3-6 3s-3-3-6-3zM12 15h6" fill="none" stroke="#fff" strokeWidth="3" /></svg>
    ),
  },
  {
    name: "Terminal",
    open: true,
    icon: (
      <svg viewBox="0 0 30 24" className="h-6 w-[30px]"><rect width="30" height="24" rx="1.500" fill="#3a3a3a" /><path d="M0 1.500A1.500 1.500 0 0 1 1.500 0H10v4H0z" fill="#c9c9c9" /><path d="M10 0h10v4H10z" fill="#8d8d8d" /><path d="M20 0h10v4H20z" fill="#6a6a6a" /><path d="M5 8l5 5-5 6" stroke="#cfcfcf" strokeWidth="2.400" fill="none" /><path d="M13 19h10" stroke="#fff" strokeWidth="2" /></svg>
    ),
  },
  {
    name: "Word",
    open: true,
    icon: (
      <svg viewBox="0 0 30 28" className="h-7 w-[30px]"><path d="M7 1a1 1 0 0 1 1-1h21a1 1 0 0 1 1 1v6H7z" fill="#41a5ee" /><path d="M7 7h23v7H7z" fill="#2b7cd3" /><path d="M7 14h23v7H7z" fill="#185abd" /><path d="M7 21h23v6a1 1 0 0 1-1 1H8a1 1 0 0 1-1-1z" fill="#103f91" /><rect y="6" width="16" height="16" rx="1.500" fill="#185abd" /><path d="M3.500 10l2 8L8 11l2.500 7 2-8" stroke="#fff" strokeWidth="1.700" fill="none" /></svg>
    ),
  },
];

function Pharaoh() {
  return (
    <svg viewBox="0 0 50 34" className="h-8 w-[50px]">
      <path d="M2 34V17l5 15M6 34l-3-12" stroke="#c9862c" strokeWidth="2" fill="none" />
      <path d="M36 32l6-12c-3-4-1-8 3-8 4-.5 6 5 3 8" stroke="#1f86a8" strokeWidth="2.500" fill="none" />
      <path d="M36 32l6-12c-3-4-1-8 3-8 4-.5 6 5 3 8" stroke="#f0c550" strokeWidth="2.500" strokeDasharray="2.500 3" fill="none" />
      <path d="M23 1c9 0 12 6 12 13l5 18-8 2H14l-8-2 5-18C11 7 14 1 23 1z" fill="#e9bb45" />
      <path d="M12 10h22M11 14h5M30 14h5M10 18h6M30 18h6M9 22h8M29 22h8M8 26h10M28 26h10M7 30h12M27 30h12M14 6h18" stroke="#16708f" strokeWidth="1.800" />
      <ellipse cx="23" cy="16" rx="7" ry="8.500" fill="#f3cf66" />
      <path d="M18 14h3.500M24.500 14H28" stroke="#17324a" strokeWidth="1.600" />
      <path d="M20.500 20.500h5" stroke="#9c5b22" strokeWidth="1.200" />
      <path d="M21.500 24h3v10h-3z" fill="#16708f" />
      <circle cx="23" cy="5" r="1.800" fill="#d4452a" />
    </svg>
  );
}

function Taskbar() {
  return (
    <footer className="flex h-[60px] shrink-0 items-center border-t border-[#7a4685] bg-[linear-gradient(to_right,#57206c_0%,#57206c_24%,#6b2d7c_32%,#7f448b_42%,#7c4088_58%,#702a6e_68%,#6a256a_80%,#5c2266_100%)] text-[15px] text-white">
      <div className="flex min-w-0 flex-1 items-center pb-1">
        <button className="ml-6 flex items-center gap-[10px] text-left leading-5">
          <span className="relative block h-8 w-[30px]">
            <svg viewBox="0 0 30 26" className="mt-[13px] h-[22px] w-[30px]">
              <circle cx="23" cy="6" r="5.500" fill="#ff8a1c" />
              <path d="M7 24a7 7 0 0 1-1-13.500A9 9 0 0 1 22 8a8 8 0 0 1 2 16z" fill="#b4cdf5" />
              <path d="M7 24a7 7 0 0 1-6-9c8 5 18-3 28 2a7 7 0 0 1-5 7z" fill="#dbe8fc" />
            </svg>
            <span className="absolute -right-1 -top-[6px] flex size-5 items-center justify-center rounded-full bg-[#ff98a0] text-sm text-[#2b1020]">1</span>
          </span>
          <span>
            27°C
            <br />
            <span className="text-[#d9c6e0]">Mostly cloudy</span>
          </span>
        </button>
      </div>
      <div className="flex items-center">
        <button aria-label="Start" className="flex w-[55px] justify-center">
          <svg viewBox="0 0 29 29" className="size-[29px]">
            <defs><linearGradient id="win" x1="0" y1="0" x2="1" y2="1"><stop offset="0" stopColor="#7fe6ff" /><stop offset="1" stopColor="#0a94f5" /></linearGradient></defs>
            <path d="M0 1a1 1 0 0 1 1-1h13v14H0zM15 0h13a1 1 0 0 1 1 1v13H15zM0 15h14v14H1a1 1 0 0 1-1-1zM15 15h14v13a1 1 0 0 1-1 1H15z" fill="url(#win)" />
          </svg>
        </button>
        <label className="ml-1 mr-1 flex h-10 w-[274px] items-center rounded-full border border-white/20 bg-white/15 pl-[14px] pr-[9px]">
          <svg viewBox="0 0 18 19" className="h-[19px] w-[18px] shrink-0" fill="none" stroke="#efe6f2" strokeWidth="2"><circle cx="8" cy="8" r="6.700" /><path d="M12.800 13l4.500 5.200" /></svg>
          <input aria-label="Search" placeholder="Search" className="ml-[13px] min-w-0 flex-1 bg-transparent text-base placeholder:text-[#d9c6e0]" />
          <Pharaoh />
        </label>
        {pins.map((p) => (
          <button
            key={p.name}
            aria-label={p.name}
            className={
              p.active
                ? "relative mr-[3px] ml-[2px] flex h-[50px] w-[50px] items-center justify-center rounded-md border border-white/10 bg-white/5"
                : "relative flex h-[50px] w-[55px] items-center justify-center"
            }
          >
            {p.icon}
            {p.open && (
              <span className={p.active ? "absolute bottom-0 left-1/2 h-1 w-5 -translate-x-1/2 rounded-full bg-[#e3a0e8]" : "absolute bottom-0 left-1/2 h-1 w-2 -translate-x-1/2 rounded-full bg-[#b692bb]"} />
            )}
            {p.badge && <span className="absolute right-[6px] top-1 flex size-5 items-center justify-center rounded-full bg-[#dc9fe6] text-sm text-black">{p.badge}</span>}
          </button>
        ))}
      </div>
      <div className="flex min-w-0 flex-1 items-center justify-end pb-[2px] pr-[25px]">
        <button aria-label="Hidden icons"><svg viewBox="0 0 14 9" className="h-[9px] w-[14px]" fill="none" stroke="#fff" strokeWidth="2"><path d="M1 8l6-6 6 6" /></svg></button>
        <button aria-label="OneDrive" className="ml-[22px]">
          <svg viewBox="0 0 20 13" className="h-[14px] w-5"><path d="M5 13A4.500 4.500 0 0 1 4.500 4 5.500 5.500 0 0 1 14 2.500L16 6z" fill="#0f6cc9" /><path d="M5 13a3 3 0 0 1-2-5l8-3 6 1.500A3.500 3.500 0 0 1 16.500 13z" fill="#28a8ea" /></svg>
        </button>
        <button className="ml-5 w-9 text-center leading-5">ENG<br />IN</button>
        <button aria-label="Network, sound and battery" className="ml-5 flex items-center gap-3">
          <svg viewBox="0 0 18 14" className="h-[14px] w-[18px]" fill="none" stroke="#fff" strokeWidth="1.500"><path d="M1 5.500a11.500 11.500 0 0 1 16 0M3.500 8.300a8 8 0 0 1 11 0M6 11a4.500 4.500 0 0 1 6 0" /><circle cx="9" cy="12.500" r="1" fill="#fff" /></svg>
          <svg viewBox="0 0 20 14" className="h-[14px] w-5" fill="none" stroke="#fff" strokeWidth="1.400"><path d="M1 4.800h3L8.500 1v12L4 9.200H1zM12 4l6.500 6.500M18.500 4L12 10.500" /></svg>
          <svg viewBox="0 0 20 12" className="h-3 w-5"><rect x="0.700" y="0.700" width="16" height="10.600" rx="2.500" fill="none" stroke="#fff" strokeWidth="1.400" /><path d="M3 3h5v6H3z" fill="#fff" /><path d="M18 4c1.500.2 1.500 3.800 0 4z" fill="#fff" stroke="#fff" /></svg>
        </button>
        <button className="ml-4 text-right leading-5 text-white">14:44<br />04-11-2023</button>
        <span className="ml-[10px] flex size-5 shrink-0 items-center justify-center rounded-full bg-[#dc9fe6] text-xs text-black">2</span>
      </div>
    </footer>
  );
}

export default function App() {
  return (
    <div className="flex h-screen flex-col overflow-hidden bg-[#0e1117] font-['Open_Sans','Noto_Sans',sans-serif]">
      <TabStrip />
      <AddressBar />
      <Bookmarks />
      <div className="h-[2px] shrink-0 bg-linear-to-r from-[#ff4b4b] to-[#fffd80]" />
      <div className="flex min-h-0 flex-1 font-['Noto_Sans_CJK_SC','Noto_Sans',sans-serif]">
        <Sidebar />
        <MainPane />
      </div>
      <Taskbar />
    </div>
  );
}
